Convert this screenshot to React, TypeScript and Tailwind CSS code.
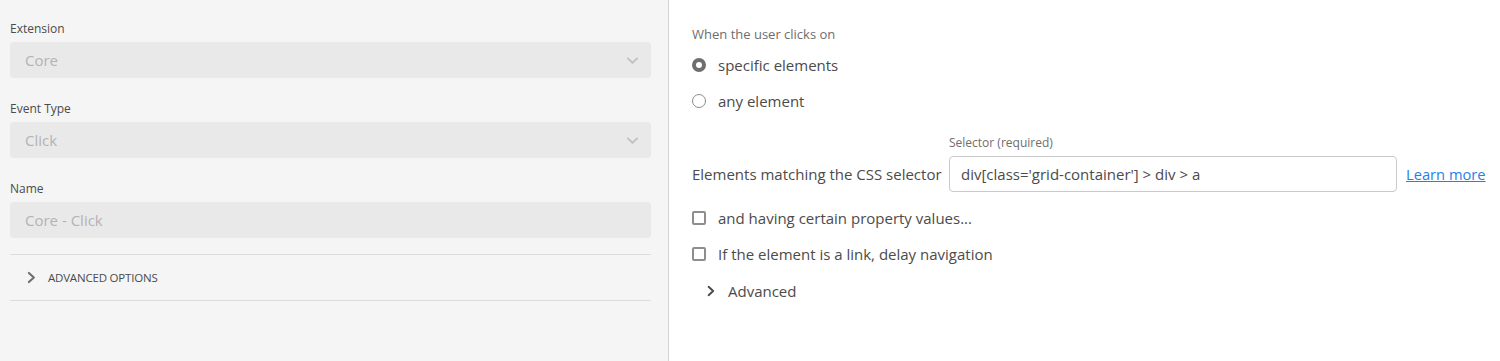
import React from 'react';

const Chevron = ({ dir = 'down', className = '' }: { dir?: 'down' | 'right'; className?: string }) => (
  <svg
    viewBox="0 0 10 10"
    className={className}
    fill="none"
    stroke="currentColor"
    strokeWidth={1.6}
    strokeLinecap="round"
    strokeLinejoin="round"
  >
    {dir === 'down' ? <path d="M1.5 3.5 L5 6.8 L8.5 3.5" /> : <path d="M3 1.5 L6.8 5 L3 8.5" />}
  </svg>
);

const Field = ({ label, value, select }: { label: string; value: string; select?: boolean }) => (
  <div>
    <div className="h-[28px] pt-[2px] flex items-center text-[12px] text-[#4b4b4b]">{label}</div>
    <div className="h-9 rounded bg-[#e9e9e9] flex items-center justify-between pl-[15px] pr-[12px]">
      <span className="text-[15px] text-[#b3b3b3]">{value}</span>
      {select && <Chevron className="w-[13px] h-[13px] text-[#c4c4c4]" />}
    </div>
  </div>
);

const Radio = ({ checked, label }: { checked?: boolean; label: string }) => (
  <label className="flex items-center h-9">
    <span
      className={`w-[14px] h-[14px] rounded-full box-border ${checked ? 'border-[4.5px] border-[#6e6e6e] bg-white' : 'border-[1.5px] border-[#8a8a8a] bg-white'}`}
    />
    <span className="ml-[12px] text-[15px] text-[#4b4b4b]">{label}</span>
  </label>
);

const Checkbox = ({ label }: { label: string }) => (
  <label className="flex items-center h-9">
    <span className="w-[14px] h-[14px] rounded-[2px] border-2 border-[#8e8e8e] bg-white box-border" />
    <span className="ml-[12px] text-[15px] text-[#4b4b4b]">{label}</span>
  </label>
);

export default function App() {
  return (
    <div className="flex w-[1500px] h-[361px] bg-white" style={{ fontFamily: '"Open Sans", "Segoe UI", sans-serif' }}>
      {/* Left panel */}
      <div className="w-[669px] shrink-0 bg-[#f5f5f5] border-r border-[#d3d3d3] pl-[10px] pr-[17px] pt-[14px]">
        <div className="flex flex-col gap-[16px]">
          <Field label="Extension" value="Core" select />
          <Field label="Event Type" value="Click" select />
          <Field label="Name" value="Core - Click" />
        </div>
        <div className="mt-[16px] border-t border-b border-[#dcdcdc] h-[47px] flex items-center pl-[15px]">
          <Chevron dir="right" className="w-[13px] h-[13px] text-[#6e6e6e]" />
          <span className="ml-[10px] text-[11.5px] tracking-[-0.2px] text-[#4b4b4b]">ADVANCED OPTIONS</span>
        </div>
      </div>

      {/* Right panel */}
      <div className="flex-1 pl-[23px] pt-[23px]">
        <div className="text-[13px] text-[#6e6e6e] leading-[22px]">When the user clicks on</div>
        <div className="mt-[2px]">
          <Radio checked label="specific elements" />
          <Radio label="any element" />
        </div>
        <div className="mt-[15px] flex items-end">
          <div className="h-9 flex items-center text-[15px] text-[#4b4b4b] w-[257px] shrink-0">Elements matching the CSS selector</div>
          <div className="flex flex-col">
            <div className="text-[12px] text-[#6e6e6e] leading-[18px] mb-[4px]">Selector (required)</div>
            <div className="w-[448px] h-9 rounded border border-[#cacaca] flex items-center px-[11px] text-[15px] text-[#4b4b4b]">
              div[class='grid-container'] &gt; div &gt; a
            </div>
          </div>
          <a href="#" className="ml-[9px] h-9 flex items-center text-[14.7px] text-[#2680eb] underline">
            Learn more
          </a>
        </div>
        <div className="mt-[8px]">
          <Checkbox label="and having certain property values..." />
          <Checkbox label="If the element is a link, delay navigation" />
        </div>
        <div className="h-9 mt-[1px] flex items-center pl-[13px]">
          <Chevron dir="right" className="w-[12px] h-[12px] text-[#4b4b4b]" />
          <span className="ml-[11px] text-[15px] text-[#4b4b4b]">Advanced</span>
        </div>
      </div>
    </div>
  );
}
